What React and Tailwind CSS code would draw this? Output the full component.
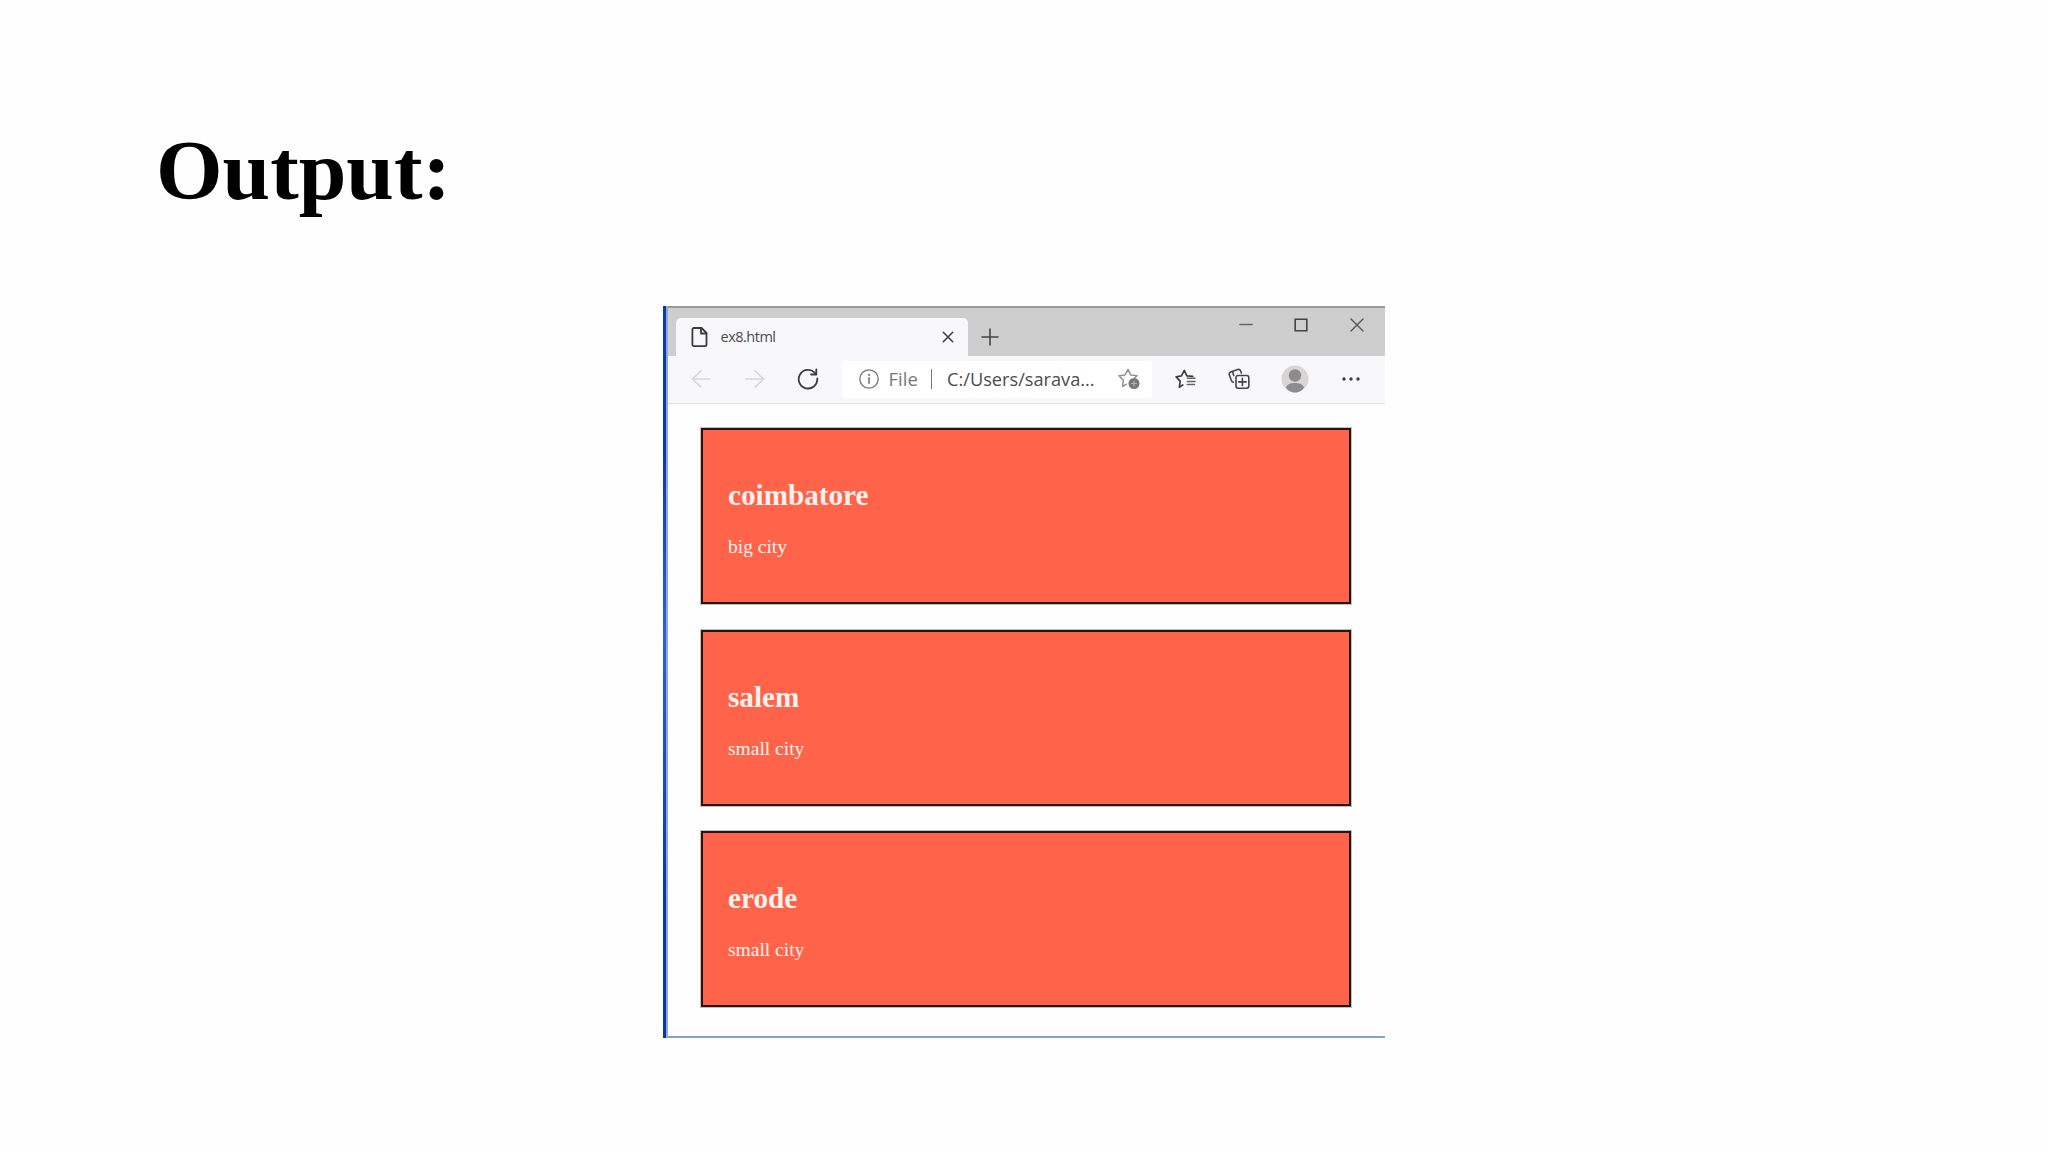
import React from "react";

const CITIES = [
  { name: "coimbatore", text: "big city" },
  { name: "salem", text: "small city" },
  { name: "erode", text: "small city" },
];

function Icon({ className, children, ...rest }) {
  return (
    <svg
      className={`shrink-0 ${className}`}
      fill="none"
      stroke="currentColor"
      strokeWidth="1.6"
      strokeLinecap="round"
      strokeLinejoin="round"
      {...rest}
    >
      {children}
    </svg>
  );
}

function TabStrip() {
  return (
    <div className="flex h-[48px] items-start bg-[#cecece] pl-[8px]">
      <div className="mt-[10px] flex h-[38px] w-[292px] items-center rounded-t-[5px] bg-[#f8f7fa] pr-[14px] pl-[15px]">
        <Icon className="h-[20px] w-[17px] text-[#3b3b3b]" viewBox="0 0 17 20" strokeWidth="1.8">
          <path d="M3 1h7.5L15.5 6v11.5a1.6 1.6 0 0 1-1.6 1.6H3a1.6 1.6 0 0 1-1.6-1.6v-15A1.6 1.6 0 0 1 3 1z" />
          <path d="M10 1.2v5.3h5.3" />
        </Icon>
        <span className="mb-px ml-[12.5px] text-[14.5px] leading-5 tracking-[-0.5px] text-[#4c4c4c]">
          ex8.html
        </span>
        <Icon className="ml-auto h-[12px] w-[12px] text-[#3f3f3f]" viewBox="0 0 12 12">
          <path d="M1.3 1.3l9.4 9.4M10.7 1.3l-9.4 9.4" />
        </Icon>
      </div>
      <Icon className="mt-[20px] ml-[13px] h-[18px] w-[18px] text-[#444]" viewBox="0 0 18 18">
        <path d="M9 1v16M1 9h16" />
      </Icon>
      <div className="mt-[10px] mr-[21px] ml-auto flex items-center text-[#444]">
        <Icon className="h-[14px] w-[14px] text-[#666]" viewBox="0 0 14 14">
          <path d="M1 6.5h12" />
        </Icon>
        <Icon className="ml-[41px] h-[14px] w-[14px]" viewBox="0 0 14 14" strokeLinejoin="miter">
          <path d="M1.2 1.2h11.6v11.6H1.2z" />
        </Icon>
        <Icon className="ml-[42px] h-[14px] w-[14px] text-[#555]" viewBox="0 0 14 14" strokeWidth="1.4">
          <path d="M1 1l12 12M13 1L1 13" />
        </Icon>
      </div>
    </div>
  );
}

function Toolbar() {
  return (
    <div className="flex h-[48px] items-center border-b border-[#dfdfe1] bg-[#f8f7fa] pb-px pl-[23px]">
      <Icon className="h-[20px] w-[20px] text-[#d8d8da]" viewBox="0 0 20 20">
        <path d="M19 10H1.5M10 1.8L1.5 10l8.5 8.2" />
      </Icon>
      <Icon className="ml-[34px] h-[20px] w-[20px] text-[#d8d8da]" viewBox="0 0 20 20">
        <path d="M1 10h17.5M10 1.8l8.5 8.2-8.5 8.2" />
      </Icon>
      <Icon className="ml-[32px] h-[22px] w-[22px] text-[#3d3d3d]" viewBox="0 0 22 22" strokeWidth="1.8">
        <path d="M20.3 10.5A9.3 9.3 0 1 1 17.6 4.6l1.4 1.6" />
        <path d="M19.3 1.3v5.2h-5.2" />
      </Icon>

      <div className="ml-[23px] flex h-[37px] w-[310px] items-center rounded-[4px] bg-white pl-[17px]">
        <Icon className="h-[20px] w-[20px] text-[#777]" viewBox="0 0 20 20" strokeWidth="1.3">
          <circle cx="10" cy="10" r="9.2" />
          <path d="M10 8.8v5.4" strokeWidth="1.6" />
          <path d="M10 5.7v.2" strokeWidth="2" />
        </Icon>
        <span className="ml-[9.5px] w-[42.5px] text-[18.5px] leading-6 text-[#777]">
          File
        </span>
        <span className="h-[20px] w-px bg-[#777]" />
        <span className="ml-[15px] w-[158px] text-[18.2px] leading-6 whitespace-nowrap text-[#4b4b4b]">
          C:/Users/sarava...
        </span>
        <Icon className="ml-auto mr-[12px] h-[22px] w-[22px] text-[#929292]" viewBox="0 0 22 22" strokeWidth="1.5">
          <path d="M8.5 16.2L4.5 18.4l.9-6.2L1 7.8l6-.9L10 1.4l2.8 5.5 6.2.9-2.4 2.2" />
          <circle cx="16" cy="15.5" r="5.5" fill="#777" stroke="none" />
          <path d="M16 13v5M13.5 15.5h5" stroke="#b5b5b5" strokeWidth="1.2" />
        </Icon>
      </div>

      <Icon className="ml-[23px] h-[20px] w-[21px] text-[#3e3e3e]" viewBox="0 0 21 20" strokeWidth="1.7">
        <path d="M7.8 15.9L4.4 18.2l.7-6.1L1.2 7.9l5.2-1.1L9.3 1.4l2.6 5.4 5.8.6" />
        <path d="M12.3 9.2h7.7M12.3 12.4h7.7M12.3 15.6h7.2" stroke="#666" strokeWidth="1.5" />
      </Icon>
      <Icon className="ml-[32px] h-[22px] w-[22px] text-[#454545]" viewBox="0 0 22 22">
        <path d="M5.2 14.3C3.9 14 3.6 13 3.2 12L1.4 7C.9 5.5 1.4 4.6 2.7 4.1l7-2.6c1.4-.4 2.3 0 2.8 1.2L13.4 5" />
        <path d="M4.5 3.5l1.2 4" />
        <rect x="8" y="7.5" width="12.8" height="12.8" rx="2.2" />
        <path d="M14.4 10.2v7.4M10.7 13.9h7.4" />
      </Icon>
      <svg className="ml-[31px] h-[28px] w-[28px] shrink-0" viewBox="0 0 28 28">
        <circle cx="14" cy="14" r="13.5" fill="#d8d6d5" />
        <circle cx="14" cy="10.5" r="6.2" fill="#8d8b8b" />
        <path d="M4.9 22.5c1-3.2 4.8-4.6 9.1-4.6s8.1 1.4 9.1 4.6c-2.2 3.2-5.4 5-9.1 5s-6.9-1.8-9.1-5z" fill="#8d8b8b" />
      </svg>
      <svg className="ml-[33px] h-[4px] w-[18px] shrink-0" viewBox="0 0 18 4" fill="#3f3f3f">
        <circle cx="2" cy="2" r="1.7" />
        <circle cx="9" cy="2" r="1.7" />
        <circle cx="16" cy="2" r="1.7" />
      </svg>
    </div>
  );
}

function CityCard({ name, text }) {
  return (
    <div className="h-[176px] border-2 border-[#241414] bg-[#ff6349] pt-[47px] pl-[25px] font-['Liberation_Serif',serif] text-[#fff1ed] shadow-[0_0_0_1px_#c4bfbd]">
      <h2 className="text-[29.2px] leading-[36px] font-bold">{name}</h2>
      <p className="mt-[22px] text-[19.5px] leading-[24px]">{text}</p>
    </div>
  );
}

export default function App() {
  return (
    <main className="h-[1152px] w-[2048px] overflow-hidden bg-[#fefefe] pt-[121px]">
      <h1 className="ml-[156px] h-[185px] font-['Liberation_Serif',serif] text-[85.6px] leading-[100px] font-bold text-black">
        Output:
      </h1>

      <div className="ml-[663px] flex h-[732px] w-[722px]">
        <div className="w-[3px] bg-linear-to-b from-[#0a3ba8] from-20% via-[#2863d3] via-45% to-[#0838a8] to-80%" />
        <div className="w-[2px] bg-[#8fa8dc]" />
        <div className="flex min-w-0 flex-1 flex-col border-t-2 border-b-2 border-t-[#999b9a] border-b-[#86a0d0] bg-[#fefefe] font-['Open_Sans',sans-serif]">
          <TabStrip />
          <Toolbar />
          <div className="mt-[24.3px] ml-[33px] flex w-[650px] flex-col gap-[25.5px]">
            {CITIES.map((city) => (
              <CityCard key={city.name} {...city} />
            ))}
          </div>
        </div>
      </div>
    </main>
  );
}
